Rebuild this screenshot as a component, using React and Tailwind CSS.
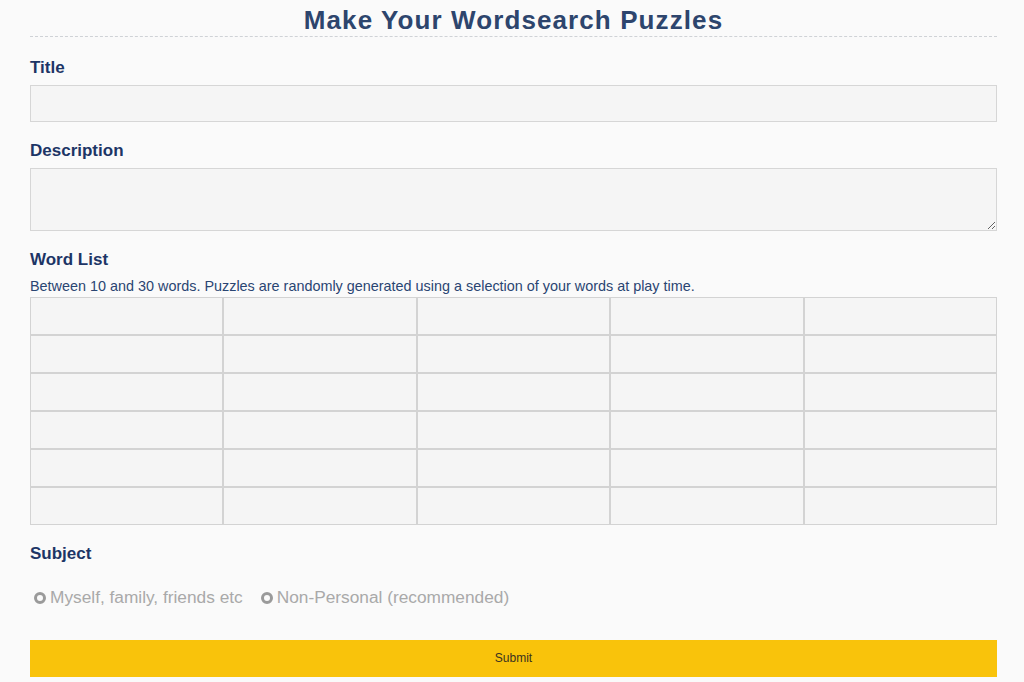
import { useState } from "react";

const labelCls = "block text-[17px] font-bold text-[#1d3566] leading-5";
const fieldCls = "block w-full bg-[#f5f5f5] border border-[#d6d6d6] outline-none";

function App() {
  const [subject, setSubject] = useState(null);
  const words = Array.from({ length: 30 });

  return (
    <div className="min-h-screen bg-[#fafafa] font-['Liberation_Sans',Arial,sans-serif]">
      <div className="ml-[30px] mr-[27px] pt-[5px]">
        {/* Header */}
        <h1 className="text-center text-[26px] font-bold tracking-[1.1px] text-[#2d456d] leading-[30px] pb-[1px] border-b border-dashed border-[#cfd2d6]">
          Make Your Wordsearch Puzzles
        </h1>

        {/* Title */}
        <div className="mt-[21px]">
          <label className={labelCls}>Title</label>
          <input type="text" className={`${fieldCls} h-[37px] mt-[7px]`} />
        </div>

        {/* Description */}
        <div className="mt-[19px]">
          <label className={labelCls}>Description</label>
          <textarea className={`${fieldCls} h-[63px] mt-[7px] resize-y`} />
        </div>

        {/* Word List */}
        <div className="mt-[19px]">
          <label className={labelCls}>Word List</label>
          <p className="mt-[8px] text-[14.4px] leading-4 text-[#2a4572]">
            Between 10 and 30 words. Puzzles are randomly generated using a selection of your words at play time.
          </p>
          <div className="grid grid-cols-5 mt-[3px]">
            {words.map((_, i) => (
              <input key={i} type="text" className="block w-full h-[38px] bg-[#f5f5f5] border border-[#d3d3d3] outline-none" />
            ))}
          </div>
        </div>

        {/* Subject */}
        <div className="mt-[19px]">
          <label className={labelCls}>Subject</label>
          <div className="flex items-center gap-[18px] mt-[21px] pl-[4px] text-[17.3px] text-[#a9a9a9]">
            <label className="flex items-center gap-[4px] cursor-pointer" onClick={() => setSubject("personal")}>
              <span className="w-[12px] h-[12px] rounded-full border-[3px] border-[#9a9a9a] bg-[#fafafa]" />
              Myself, family, friends etc
            </label>
            <label className="flex items-center gap-[4px] cursor-pointer" onClick={() => setSubject("non-personal")}>
              <span className="w-[12px] h-[12px] rounded-full border-[3px] border-[#9a9a9a] bg-[#fafafa]" />
              Non-Personal (recommended)
            </label>
          </div>
        </div>

        {/* Submit */}
        <button className="block w-full h-[37px] mt-[29px] bg-[#f9c30b] text-[12px] text-[#3a3220]">
          Submit
        </button>
      </div>
    </div>
  );
}

export default App;
